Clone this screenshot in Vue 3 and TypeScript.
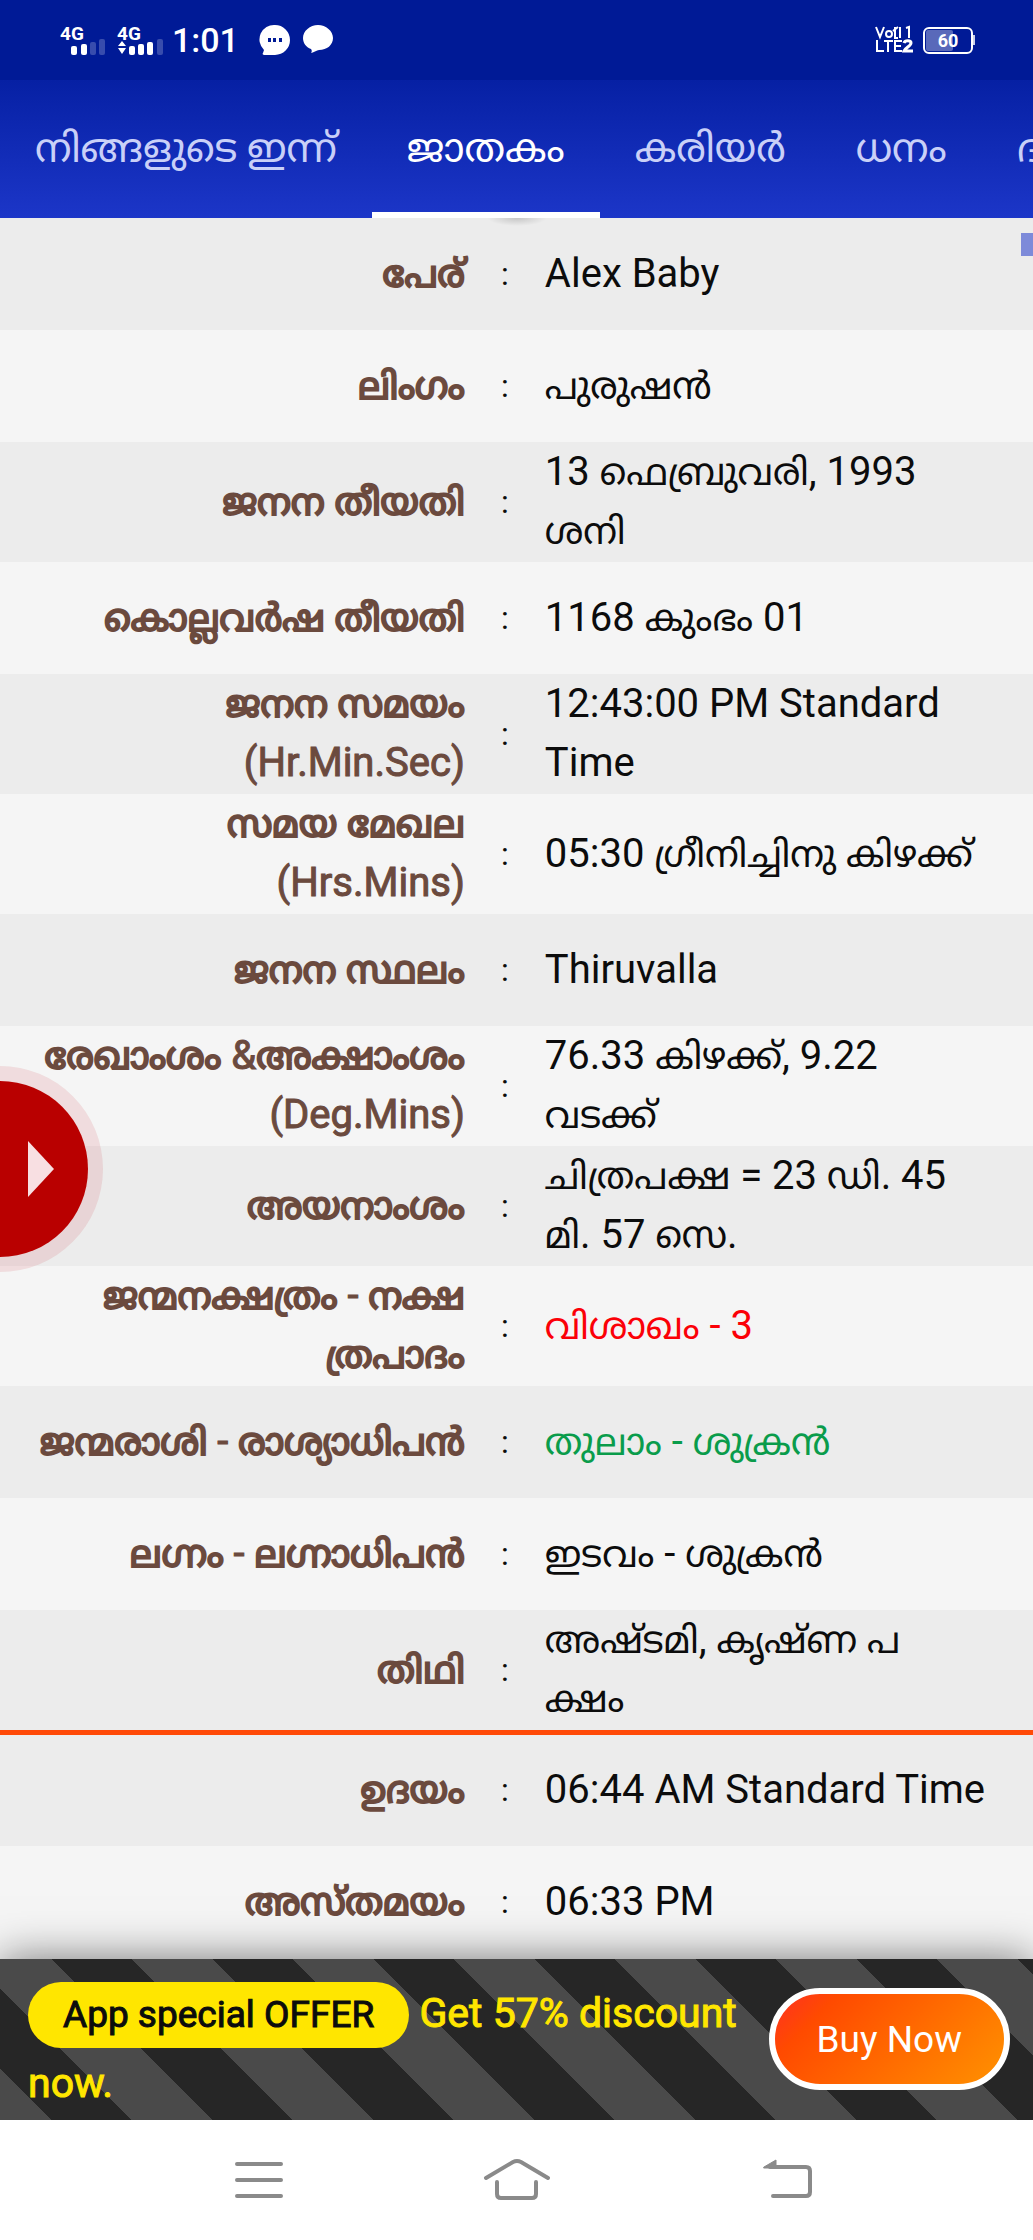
<script setup lang="ts">
interface Detail {
  label: string
  value: string
  tone?: 'red' | 'green'
  marked?: boolean
}

interface Run {
  text: string
  malayalam: boolean
}

const tabs: string[] = ['നിങ്ങളുടെ ഇന്ന്', 'ജാതകം', 'കരിയർ', 'ധനം', 'ദ']
const activeTab = 1

const birth: Detail[] = [
  { label: 'പേര്', value: 'Alex Baby' },
  { label: 'ലിംഗം', value: 'പുരുഷൻ' },
  { label: 'ജനന തീയതി', value: '13 ഫെബ്രുവരി, 1993\nശനി' },
  { label: 'കൊല്ലവർഷ തീയതി', value: '1168 കുംഭം 01' },
  { label: 'ജനന സമയം\n(Hr.Min.Sec)', value: '12:43:00 PM Standard\nTime' },
  { label: 'സമയ മേഖല\n(Hrs.Mins)', value: '05:30 ഗ്രീനിച്ചിനു കിഴക്ക്' },
  { label: 'ജനന സ്ഥലം', value: 'Thiruvalla' },
  { label: 'രേഖാംശം &അക്ഷാംശം\n(Deg.Mins)', value: '76.33 കിഴക്ക്, 9.22\nവടക്ക്' },
  { label: 'അയനാംശം', value: 'ചിത്രപക്ഷ = 23 ഡി. 45\nമി. 57 സെ.' },
  { label: 'ജന്മനക്ഷത്രം - നക്ഷ\nത്രപാദം', value: 'വിശാഖം - 3', tone: 'red' },
  { label: 'ജന്മരാശി - രാശ്യാധിപൻ', value: 'തുലാം - ശുക്രൻ', tone: 'green' },
  { label: 'ലഗ്നം - ലഗ്നാധിപൻ', value: 'ഇടവം - ശുക്രൻ' },
  { label: 'തിഥി', value: 'അഷ്ടമി, കൃഷ്ണ പ\nക്ഷം', marked: true },
]

const sun: Detail[] = [
  { label: 'ഉദയം', value: '06:44 AM Standard Time' },
  { label: 'അസ്തമയം', value: '06:33 PM' },
]

const groups = [
  { name: 'birth', rows: birth },
  { name: 'sun', rows: sun },
]

const isTall = (d: Detail): boolean => d.label.includes('\n') || d.value.includes('\n')

// Malayalam letters are set slightly smaller than the Latin text beside them.
const runs = (text: string): Run[] =>
  text
    .split(/([\u0D00-\u0D7F]+)/)
    .filter((part) => part !== '')
    .map((part) => ({ text: part, malayalam: /[\u0D00-\u0D7F]/.test(part) }))
</script>

<template>
  <div class="page">
    <header class="status">
      <svg class="signal" width="106" height="40" viewBox="0 0 106 40" fill="#fff" aria-hidden="true">
        <text x="0" y="20" class="net">4G</text>
        <rect x="11" y="26" width="6" height="9" rx="2" />
        <rect x="21" y="24" width="6" height="11" rx="2" />
        <rect x="30" y="22" width="6" height="13" rx="2" opacity=".22" />
        <rect x="39" y="19" width="6" height="16" rx="2" opacity=".22" />
        <text x="57" y="20" class="net">4G</text>
        <path d="M62 21l4 5h-8zM58 28h8l-4 6z" />
        <rect x="69" y="26" width="6" height="9" rx="2" />
        <rect x="78" y="24" width="6" height="11" rx="2" />
        <rect x="87" y="22" width="6" height="13" rx="2" />
        <rect x="97" y="19" width="6" height="16" rx="2" opacity=".22" />
      </svg>
      <span class="clock">1:01</span>
      <svg class="bubbles" width="76" height="36" viewBox="0 0 76 36" fill="#fff" aria-hidden="true">
        <path d="M16 3a14.500 14.500 0 0 1 0 30H5c-1 0-2-1-1-2l1-3A14.500 14.500 0 0 1 16 3z" />
        <g fill="#001a96">
          <rect x="9" y="16" width="3" height="4" />
          <rect x="14" y="16" width="3" height="4" />
          <rect x="20" y="16" width="3" height="4" />
        </g>
        <path d="M59 3c8 0 15 6 15 13s-6 12-14 12c-2 0-6 3-8 3 1-1 1-3 0-4-5-2-8-6-8-11C44 9 51 3 59 3z" />
      </svg>
      <svg class="right" width="102" height="36" viewBox="0 0 102 36" aria-hidden="true">
        <g fill="none" stroke="#fff" stroke-width="2">
          <path d="M1 5l4 10 4-10M20 5v11h3M18 9l5-4M25 5v11M31 6l3-1v11" />
          <circle cx="14" cy="12" r="3" />
          <path d="M2 18v11h7M9 19h9M13 18v12M27 19h-7v10h7M20 24h6" />
          <path d="M29 21c1-3 7-3 7 0 0 3-6 5-7 8h9" stroke-width="3" />
          <rect x="49" y="6" width="48" height="25" rx="5" />
        </g>
        <rect x="51" y="8" width="27" height="21" rx="2" fill="#fff" opacity=".35" />
        <path d="M98 13h2v10h-2z" fill="#fff" opacity=".8" />
        <text x="73" y="25" class="level" text-anchor="middle">60</text>
      </svg>
    </header>

    <nav class="tabs">
      <a
        v-for="(tab, i) in tabs"
        :key="tab"
        href="#"
        class="tab"
        :class="{ active: i === activeTab }"
      >{{ tab }}</a>
    </nav>

    <main class="content">
      <table class="details">
        <tbody v-for="g in groups" :key="g.name" :class="g.name">
          <tr v-for="d in g.rows" :key="d.label" :class="{ tall: isTall(d), marked: d.marked }">
            <th scope="row"><span v-for="(r, i) in runs(d.label)" :key="i" :class="{ ml: r.malayalam }">{{ r.text }}</span></th>
            <td class="colon">:</td>
            <td :class="d.tone"><span v-for="(r, i) in runs(d.value)" :key="i" :class="{ ml: r.malayalam }">{{ r.text }}</span></td>
          </tr>
        </tbody>
      </table>
      <span class="edge-marker"></span>
      <button class="drawer" type="button" aria-label="Open menu">
        <svg width="26" height="56" viewBox="0 0 26 56"><path d="M0 0l26 28L0 56z" fill="#f8dfe2" /></svg>
      </button>
    </main>

    <section class="offer">
      <p><span class="pill">App special OFFER</span> <span>Get 57% discount</span> <span>now.</span></p>
      <button class="buy" type="button">Buy Now</button>
    </section>

    <footer class="sysnav">
      <button type="button" aria-label="Recent apps">
        <svg width="100" height="60" viewBox="0 0 100 60">
          <path d="M28 14h44M28 30h44M28 46h44" />
        </svg>
      </button>
      <button type="button" aria-label="Home">
        <svg width="100" height="60" viewBox="0 0 100 60">
          <path d="M20 28l27-16q4-2 8 0l27 16M31 32v12q0 4 4 4h31q4 0 4-4V32" />
        </svg>
      </button>
      <button type="button" aria-label="Back">
        <svg width="100" height="60" viewBox="0 0 100 60">
          <path d="M46 17h36q4 0 4 4v21q0 4-4 4H49" />
          <path d="M40 17l12-7v8H40z" class="solid" />
        </svg>
      </button>
    </footer>
  </div>
</template>

<style>
body {
  margin: 0;
  background: #fff;
}
</style>

<style scoped>
.page {
  display: flex;
  flex-direction: column;
  min-height: 100vh;
  overflow: hidden;
  font-family: Roboto, "Noto Sans Malayalam", "Noto Sans", sans-serif;
  font-size: 40px;
  color: #0c0c0c;
}

.status {
  display: flex;
  align-items: center;
  height: 80px;
  padding: 0 56px 0 60px;
  box-sizing: border-box;
  background: #001a96;
  color: #fff;
}
.net {
  font-size: 19px;
  font-weight: 700;
}
.level {
  font-size: 18px;
  font-weight: 700;
  fill: #fff;
}
.clock {
  margin-left: 6px;
  font-size: 34px;
  font-weight: 500;
  line-height: 40px;
}
.bubbles {
  margin-left: 20px;
}
.right {
  margin-left: auto;
}

.tabs {
  display: flex;
  height: 138px;
  overflow: hidden;
  background: linear-gradient(#0620a4, #1c36c8);
}
.tab {
  flex: none;
  box-sizing: border-box;
  padding: 0 35px;
  border-bottom: 6px solid transparent;
  line-height: 138px;
  white-space: nowrap;
  text-decoration: none;
  color: #c9d0f8;
}
.tab.active {
  border-bottom-color: #fff;
  color: #fff;
}

.content {
  position: relative;
}
.content::before {
  content: "";
  position: absolute;
  top: 0;
  left: 50%;
  width: 60px;
  height: 8px;
  margin-left: -30px;
  background: radial-gradient(ellipse at top, rgba(0, 0, 0, 0.16), transparent 70%);
}
.details {
  width: 100%;
  table-layout: fixed;
  border-collapse: collapse;
}
.details tr {
  height: 112px;
  background: #f5f5f5;
}
.details tr:nth-child(odd) {
  background: #ececec;
}
.details tr.tall {
  height: 120px;
}
.details .sun tr {
  height: 113px;
}
.details th,
.details td {
  padding: 0 0 2px;
  line-height: 59px;
  font-weight: 400;
  text-align: left;
  vertical-align: middle;
  white-space: pre;
}
.details .ml {
  font-size: 37px;
  line-height: 40px;
}
.details th {
  width: 45%;
  text-align: right;
  color: #6b4a3e;
  -webkit-text-stroke: 1px #6b4a3e;
}
.details th .ml {
  -webkit-text-stroke-width: 2px;
}
.details .colon {
  width: 80px;
  padding: 0;
  font-size: 32px;
  text-align: center;
}
.details .red {
  color: #fb0007;
}
.details .green {
  color: #0a9c4b;
}
.details tr.marked th,
.details tr.marked td {
  border-bottom: 5px solid #ff4a08;
}

.edge-marker {
  position: absolute;
  top: 15px;
  right: 0;
  width: 12px;
  height: 23px;
  background: #7d8ad9;
}
.drawer {
  position: absolute;
  top: 863px;
  left: 0;
  display: flex;
  align-items: center;
  width: 88px;
  height: 176px;
  padding: 0 0 0 28px;
  border: 0;
  border-radius: 0 88px 88px 0;
  background: #b90000;
  box-shadow: 0 0 0 15px rgba(200, 0, 20, 0.1);
}

.offer {
  position: relative;
  display: flex;
  align-items: center;
  justify-content: space-between;
  height: 161px;
  padding: 0 23px 0 28px;
  background-color: #262626;
  background-image: linear-gradient(45deg, #4a4a4a 25%, #262626 25%, #262626 50%, #4a4a4a 50%, #4a4a4a 75%, #262626 75%);
  background-size: 161px 161px;
  background-position: -29px 0;
  box-shadow: 0 0 42px rgba(0, 0, 0, 0.52);
}
.offer p {
  flex: 1;
  margin: 0;
  padding-top: 18px;
  font-size: 41px;
  line-height: 70px;
  color: #ffe600;
  -webkit-text-stroke: 1px #ffe600;
}
.pill {
  display: inline-block;
  padding: 0 35px;
  border-radius: 33px;
  background: #ffe600;
  color: #0c0c0c;
  font-size: 37px;
  line-height: 66px;
  -webkit-text-stroke: 1px #0c0c0c;
}
.buy {
  flex: none;
  height: 102px;
  padding: 0 42px;
  border: 6px solid #fff;
  border-radius: 51px;
  background: linear-gradient(135deg, #ff2b2b, #ff4a00 22%, #ff9500);
  background-origin: border-box;
  color: #fff;
  font-family: inherit;
  font-size: 37px;
}

.sysnav {
  position: relative;
  display: grid;
  grid-template-columns: repeat(3, 1fr);
  flex: 1;
  min-height: 120px;
  padding: 0 130px;
  background: #fff;
}
.sysnav button {
  display: flex;
  align-items: center;
  justify-content: center;
  padding: 0;
  border: 0;
  background: none;
}
.sysnav path {
  fill: none;
  stroke: #8a8a8a;
  stroke-width: 4;
  stroke-linecap: round;
}
.sysnav .solid {
  fill: #8a8a8a;
  stroke-width: 1;
}
</style>
